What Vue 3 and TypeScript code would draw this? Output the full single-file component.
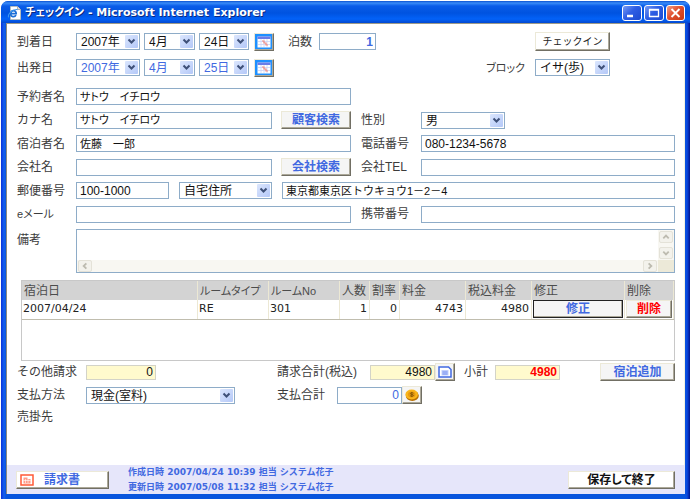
<script setup lang="ts">
import { reactive } from 'vue'

interface Stay {
  date: string
  type: string
  room: string
  guests: number
  discount: number
  price: number
  total: number
}

const form = reactive({
  arriveYear: '2007年',
  arriveMonth: '4月',
  arriveDay: '24日',
  leaveYear: '2007年',
  leaveMonth: '4月',
  leaveDay: '25日',
  nights: '1',
  block: 'イサ(歩)',
  booker: 'サトウ　イチロウ',
  kana: 'サトウ　イチロウ',
  gender: '男',
  guest: '佐藤　一郎',
  phone: '080-1234-5678',
  company: '',
  companyTel: '',
  postal: '100-1000',
  addressKind: '自宅住所',
  address: '東京都東京区トウキョウ1－2－4',
  email: '',
  mobile: '',
  note: '',
  other: '0',
  billed: '4980',
  subtotal: '4980',
  method: '現金(室料)',
  paid: '0',
})

const stays: Stay[] = [
  { date: '2007/04/24', type: 'RE', room: '301', guests: 1, discount: 0, price: 4743, total: 4980 },
]
</script>

<template>
  <div class="window">
    <header class="titlebar">
      <svg class="ie" viewBox="0 0 14 14" aria-hidden="true">
        <path d="M3.5 .5h7l3 3v10h-10z" fill="#fff" stroke="#c8c4a8" stroke-width=".7" />
        <path d="M10.500 .5v3h3" fill="#ddd" stroke="#888" stroke-width=".6" />
        <path d="M3.600 7.600h5.600c0-4-5.200-4-5.500 0-.2 3.600 4.200 4 5.200 1.400" fill="none" stroke="#1c6fd6" stroke-width="1.700" />
        <path d="M1.500 11.400C.5 8 6 2.800 10.500 3.600" fill="none" stroke="#3c97ee" stroke-width="1.100" />
      </svg>
      <h1>チェックイン - Microsoft Internet Explorer</h1>
      <button class="ctl" type="button" aria-label="最小化">
        <svg viewBox="0 0 16 14"><path d="M3 10h6" stroke="#fff" stroke-width="2.500" /></svg>
      </button>
      <button class="ctl" type="button" aria-label="最大化">
        <svg viewBox="0 0 16 14"><path d="M3.500 3.500h9v7h-9zM3 4h10" fill="none" stroke="#fff" stroke-width="1.300" /></svg>
      </button>
      <button class="ctl close" type="button" aria-label="閉じる">
        <svg viewBox="0 0 16 14"><path d="M4 3l8 8M12 3l-8 8" stroke="#fff" stroke-width="1.900" /></svg>
      </button>
    </header>

    <main class="page">
      <section class="stay">
        <div class="row">
          <label class="name" for="ay">到着日</label>
          <span class="pick year"><select id="ay" v-model="form.arriveYear"><option>2007年</option></select><svg class="arrow" viewBox="0 0 13 13"><path d="M3.500 4.500l3 3 3-3" /></svg></span>
          <span class="pick month"><select v-model="form.arriveMonth" aria-label="到着月"><option>4月</option></select><svg class="arrow" viewBox="0 0 13 13"><path d="M3.500 4.500l3 3 3-3" /></svg></span>
          <span class="pick day"><select v-model="form.arriveDay" aria-label="到着日"><option>24日</option></select><svg class="arrow" viewBox="0 0 13 13"><path d="M3.500 4.500l3 3 3-3" /></svg></span>
          <button class="btn cal" type="button" aria-label="カレンダー">
            <svg viewBox="0 0 14 12"><path d="M.5.5h13v11H.5z" fill="#fff" /><path d="M.5.5h13v2.500H.5z" fill="#6a7de8" /><path d="M1 5.500h12M1 8.500h12M4 3v8M7 3v8M10 3v8" stroke="#ccd4f6" stroke-width=".8" /><path d="M5 5h2v2h2v2h2" fill="none" stroke="#f08a80" stroke-width="1.200" /></svg>
          </button>
          <label class="nights" for="nights">泊数</label>
          <input id="nights" v-model="form.nights" class="num blue strong short">
          <button class="btn plain right" type="button">チェックイン</button>
        </div>
        <div class="row blue-picks">
          <label class="name" for="ly">出発日</label>
          <span class="pick year"><select id="ly" v-model="form.leaveYear"><option>2007年</option></select><svg class="arrow" viewBox="0 0 13 13"><path d="M3.500 4.500l3 3 3-3" /></svg></span>
          <span class="pick month"><select v-model="form.leaveMonth" aria-label="出発月"><option>4月</option></select><svg class="arrow" viewBox="0 0 13 13"><path d="M3.500 4.500l3 3 3-3" /></svg></span>
          <span class="pick day"><select v-model="form.leaveDay" aria-label="出発日"><option>25日</option></select><svg class="arrow" viewBox="0 0 13 13"><path d="M3.500 4.500l3 3 3-3" /></svg></span>
          <button class="btn cal" type="button" aria-label="カレンダー">
            <svg viewBox="0 0 14 12"><path d="M.5.5h13v11H.5z" fill="#fff" /><path d="M.5.5h13v2.500H.5z" fill="#6a7de8" /><path d="M1 5.500h12M1 8.500h12M4 3v8M7 3v8M10 3v8" stroke="#ccd4f6" stroke-width=".8" /><path d="M5 5h2v2h2v2h2" fill="none" stroke="#f08a80" stroke-width="1.200" /></svg>
          </button>
          <label class="block kana" for="block">ブロック</label>
          <span class="pick black right"><select id="block" v-model="form.block"><option>イサ(歩)</option></select><svg class="arrow" viewBox="0 0 13 13"><path d="M3.500 4.500l3 3 3-3" /></svg></span>
        </div>
      </section>

      <section class="guest">
        <label for="booker">予約者名</label>
        <input id="booker" v-model="form.booker" class="jp kana">
        <span class="blank"></span>

        <label for="kana">カナ名</label>
        <div class="pair">
          <input id="kana" v-model="form.kana" class="jp kana">
          <button class="btn search" type="button">顧客検索</button>
        </div>
        <label class="second" for="gender">性別</label>
        <span class="pick gender"><select id="gender" v-model="form.gender"><option>男</option><option>女</option></select><svg class="arrow" viewBox="0 0 13 13"><path d="M3.500 4.500l3 3 3-3" /></svg></span>

        <label for="guest">宿泊者名</label>
        <input id="guest" v-model="form.guest" class="jp">
        <label class="second" for="phone">電話番号</label>
        <input id="phone" v-model="form.phone">

        <label for="company">会社名</label>
        <div class="pair">
          <input id="company" v-model="form.company">
          <button class="btn search" type="button">会社検索</button>
        </div>
        <label class="second" for="ctel">会社TEL</label>
        <input id="ctel" v-model="form.companyTel">

        <label for="postal">郵便番号</label>
        <div class="address">
          <input id="postal" v-model="form.postal">
          <span class="pick"><select v-model="form.addressKind" aria-label="住所区分"><option>自宅住所</option></select><svg class="arrow" viewBox="0 0 13 13"><path d="M3.500 4.500l3 3 3-3" /></svg></span>
          <input v-model="form.address" class="jp" aria-label="住所">
        </div>

        <label class="kana" for="email">eメール</label>
        <input id="email" v-model="form.email">
        <label class="second" for="mobile">携帯番号</label>
        <input id="mobile" v-model="form.mobile">
      </section>

      <section class="note">
        <label for="note">備考</label>
        <div class="memo">
          <textarea id="note" v-model="form.note"></textarea>
          <div class="vbar">
            <svg viewBox="0 0 13 11"><path d="M3.500 7l3-3 3 3" /></svg>
            <svg viewBox="0 0 13 11"><path d="M3.500 4l3 3 3-3" /></svg>
          </div>
          <div class="hbar">
            <svg viewBox="0 0 13 11"><path d="M8 2.500l-3 3 3 3" /></svg>
            <svg viewBox="0 0 13 11"><path d="M5 2.500l3 3-3 3" /></svg>
          </div>
          <div class="corner"></div>
        </div>
      </section>

      <section class="list">
        <table>
          <colgroup>
            <col><col class="c72"><col class="c72"><col class="c30"><col class="c30"><col class="c66"><col class="c66"><col class="c93"><col class="c50">
          </colgroup>
          <thead>
            <tr>
              <th>宿泊日</th><th class="kana">ルームタイプ</th><th class="kana">ルームNo</th><th>人数</th><th>割率</th><th>料金</th><th>税込料金</th><th>修正</th><th>削除</th>
            </tr>
          </thead>
          <tbody>
            <tr v-for="s in stays" :key="s.date">
              <td>{{ s.date }}</td>
              <td>{{ s.type }}</td>
              <td>{{ s.room }}</td>
              <td class="n">{{ s.guests }}</td>
              <td class="n">{{ s.discount }}</td>
              <td class="n">{{ s.price }}</td>
              <td class="n">{{ s.total }}</td>
              <td class="act"><button class="btn edit" type="button">修正</button></td>
              <td class="act"><button class="btn del" type="button">削除</button></td>
            </tr>
          </tbody>
        </table>
      </section>

      <section class="sums">
        <label for="other">その他請求</label>
        <input id="other" v-model="form.other" class="num yellow other">
        <div class="line">
          <label class="billed" for="billed">請求合計(税込)</label>
          <input id="billed" v-model="form.billed" class="num yellow">
          <button class="btn icon" type="button" aria-label="明細">
            <svg viewBox="0 0 14 12"><path d="M1 1h9.500L13 3.500V11H1z" fill="#fff" stroke="#4169e1" stroke-width="1.500" /><path d="M3.500 4h7v5.500h-7z" fill="#c3d0fa" /><path d="M4 6h6M4 8h6M6 5v4M8 5v4" stroke="#7f9af0" stroke-width=".7" /></svg>
          </button>
          <label class="subtotal" for="subtotal">小計</label>
          <input id="subtotal" v-model="form.subtotal" class="num yellow red strong">
          <button class="btn add" type="button">宿泊追加</button>
        </div>

        <label for="method">支払方法</label>
        <span class="pick"><select id="method" v-model="form.method"><option>現金(室料)</option></select><svg class="arrow" viewBox="0 0 13 13"><path d="M3.500 4.500l3 3 3-3" /></svg></span>
        <div class="line">
          <label class="paid" for="paid">支払合計</label>
          <input id="paid" v-model="form.paid" class="num blue">
          <button class="btn icon" type="button" aria-label="入金">
            <svg viewBox="0 0 14 12"><ellipse cx="7.300" cy="6.800" rx="6.500" ry="5.100" fill="#b86f00" /><ellipse cx="6.700" cy="5.500" rx="6.300" ry="4.900" fill="#f9b51c" /><ellipse cx="6.700" cy="5.500" rx="3.800" ry="3" fill="#e89a10" /><path d="M8.500 4.300c-1-1-3.500-.7-3.200.4.300 1 3.200.5 3.200 1.700 0 1-2.500 1.200-3.500.2M6.800 3v5" fill="none" stroke="#7d5208" stroke-width=".8" /></svg>
          </button>
        </div>

        <span class="text">売掛先</span>
      </section>
    </main>

    <footer class="foot">
      <button class="btn plain invoice" type="button">
        <svg viewBox="0 0 14 12"><path d="M1 1h12v10H1z" fill="#fff" stroke="#ff5a36" stroke-width="1.500" /><path d="M3.500 3.500h4v1.500h3v4.500h-7z" fill="#ff9c88" /><path d="M3.500 6.500h7M5.500 5v4M8 5v4" stroke="#fff" stroke-width=".6" /></svg>
        <span>請求書</span>
      </button>
      <div class="log">
        <span>作成日時 2007/04/24 10:39 担当 システム花子</span>
        <span>更新日時 2007/05/08 11:32 担当 システム花子</span>
      </div>
      <button class="btn plain save" type="button">保存して終了</button>
    </footer>
  </div>
</template>

<style>
body {
  margin: 0;
  background: #fff;
}
</style>

<style scoped>
.window,
.window * {
  box-sizing: border-box;
}

.window {
  display: flex;
  flex-direction: column;
  min-height: 100vh;
  padding: 0 5px 5px;
  border: 1px solid #fff;
  border-radius: 8px 8px 0 0;
  background: linear-gradient(90deg, #0831d9 0, #1660ee 3px, #0855dd 5px, #0855dd calc(100% - 5px), #0a48e0 calc(100% - 3px), #00138c 100%);
  background-clip: padding-box;
  font-family: "Liberation Sans", "Noto Sans CJK JP", sans-serif;
  font-size: 12px;
  line-height: 16px;
  color: #3c3c3c;
}

.titlebar {
  display: flex;
  align-items: center;
  gap: 2px;
  height: 22px;
  margin: 0 -5px;
  padding: 2px 5px 0 6px;
  border-radius: 7px 7px 0 0;
  background: linear-gradient(#0a50d0 0, #3a8cf8 2px, #0a5ce8 5px, #0053e0 12px, #0362f8 18px, #0348d0 100%);
}

.ie {
  width: 14px;
  height: 14px;
}

.titlebar h1 {
  flex: 1;
  margin: 0 0 0 2px;
  font: bold 11px/16px "DejaVu Sans", "Noto Sans CJK JP", sans-serif;
  font-feature-settings: "palt";
  color: #fff;
  text-shadow: 1px 1px 0 #0a2a80;
}

.ctl {
  width: 20px;
  height: 16px;
  padding: 0;
  border: 1px solid #fff;
  border-radius: 3px;
  background: linear-gradient(135deg, #7a9cf4, #2e5ee4 45%, #1c4ad0);
}

.ctl.close {
  width: 19px;
  background: linear-gradient(135deg, #f0a088, #e05030 45%, #c83a14);
}

.ctl svg {
  display: block;
  width: 100%;
  height: 14px;
}

.page {
  flex: 1;
  padding: 9px 9px 0 9px;
  border-top: 1px solid #9d9a88;
  border-left: 1px solid #8d8a80;
  border-right: 1px solid #f4f1e0;
  background: #fff;
}

label,
.text {
  padding-left: 1px;
  white-space: nowrap;
}

input,
select,
textarea {
  min-width: 0;
  width: 100%;
  height: 17px;
  margin: 0;
  padding: 0 3px;
  border: 1px solid #8eacc8;
  border-radius: 0;
  outline: 0;
  background: #fff;
  font: inherit;
  line-height: 15px;
  color: #111;
}

select {
  appearance: none;
  padding: 1px 16px 0 4px;
}

.jp {
  padding-bottom: 2px;
  font-size: 11px;
}

.kana {
  font-size: 11px;
  font-feature-settings: "palt";
}

.pick {
  display: grid;
  grid-template-columns: minmax(0, 1fr);
}

.pick > * {
  grid-area: 1 / 1;
}

.arrow {
  align-self: center;
  justify-self: end;
  width: 13px;
  height: 13px;
  margin-right: 2px;
  border-radius: 1px;
  background: linear-gradient(135deg, #dbe6fd, #b4c8f8);
  pointer-events: none;
}

.arrow path {
  fill: none;
  stroke: #3e5078;
  stroke-width: 2;
}

.btn {
  height: 18px;
  padding: 0;
  border: 1px solid;
  border-color: #ece9d8 #716f64 #716f64 #ece9d8;
  box-shadow: inset -1px -1px 0 #aca899;
  background: #f5f5f5;
  font: bold 12px/14px "Liberation Sans", "Noto Sans CJK JP", sans-serif;
  color: #4169e1;
  white-space: nowrap;
}

.btn.plain {
  background: #fff;
}

.num {
  text-align: right;
  padding-right: 2px;
}

.blue {
  color: #4169e1;
}

.red {
  color: #f00;
}

.strong {
  font-weight: bold;
}

.yellow {
  height: 15px;
  border-color: #d3d3c8;
  background: #fffacd;
}

.stay {
  display: grid;
  gap: 9px;
}

.row {
  display: flex;
  align-items: center;
  height: 17px;
}

.row .name {
  width: 60px;
}

.year {
  width: 64px;
  margin-right: 4px;
}

.month {
  width: 51px;
  margin-right: 4px;
}

.day {
  width: 50px;
  margin-right: 5px;
}

.blue-picks select {
  color: #4169e1;
}

.blue-picks .black select {
  color: #111;
}

.cal {
  display: grid;
  place-items: center;
  width: 20px;
  background: #1e90ff;
}

.cal svg,
.icon svg,
.invoice svg {
  width: 14px;
  height: 12px;
}

.nights {
  width: 45px;
  padding-left: 14px;
}

.short {
  width: 57px;
}

.right {
  width: 75px;
  margin-right: 65px;
}

.btn.right {
  height: 19px;
  margin-left: auto;
  font-weight: normal;
  font-size: 10px;
  color: #222;
}

.block {
  margin-left: auto;
  margin-right: 10px;
}

.guest {
  display: grid;
  grid-template-columns: 60px 275px 70px minmax(0, 1fr);
  grid-template-rows: repeat(6, 1fr);
  align-items: center;
  min-height: 141px;
  margin-top: 9px;
}

.blank {
  grid-column: 3 / 5;
}

.second {
  padding-left: 10px;
}

.pair {
  display: grid;
  grid-template-columns: minmax(0, 1fr) 70px;
  gap: 9px;
  align-items: center;
}

.address {
  grid-column: 2 / 5;
  display: grid;
  grid-template-columns: 93px 93px minmax(0, 1fr);
  gap: 10px;
}

.gender {
  width: 84px;
}

.note {
  display: grid;
  grid-template-columns: 60px minmax(0, 1fr);
  margin-top: 3px;
}

.note label {
  padding-top: 3px;
}

.memo {
  display: grid;
  grid-template-columns: minmax(0, 1fr) 16px;
  grid-template-rows: 30px 12px;
  border: 1px solid #8eacc8;
}

.memo textarea {
  height: 100%;
  border: 0;
  resize: none;
  overflow: hidden;
}

.vbar,
.hbar {
  display: flex;
  justify-content: space-between;
  background: #f8f7f2;
}

.vbar {
  flex-direction: column;
  align-items: center;
  padding: 1px 0;
}

.hbar {
  padding: 0 1px;
}

.vbar svg,
.hbar svg {
  width: 14px;
  height: 12px;
  border: 1px solid #e4e2d8;
  border-radius: 2px;
  background: #f3f2ec;
}

.vbar path,
.hbar path {
  fill: none;
  stroke: #bdbbb0;
  stroke-width: 2;
}

.corner {
  background: #ece9d8;
}

.list {
  min-height: 81px;
  margin-top: 7px;
  margin-left: 5px;
  border: 1px solid #c8c8c8;
}

table {
  width: 100%;
  table-layout: fixed;
  border-collapse: collapse;
  font-size: 11px;
  color: #222;
}

.c72 { width: 71px; }
.c30 { width: 30px; }
.c66 { width: 66px; }
.c93 { width: 93px; }
.c50 { width: 49px; }

th,
td {
  height: 19px;
  padding: 0 2px;
  border-right: 1px solid #ece8d4;
  line-height: 16px;
  text-align: left;
  white-space: nowrap;
}

th {
  background: #d3d3d3;
  font-size: 12px;
  font-weight: normal;
  color: #4c4c4c;
}

th.kana {
  font-size: 11px;
}

td {
  padding: 0 1px;
  border-bottom: 1px solid #c0bdae;
  font-family: "DejaVu Sans", sans-serif;
}

td.n {
  padding-right: 2px;
  text-align: right;
}

td.act {
  padding: 0 1px;
}

td .btn {
  display: block;
  width: 100%;
}

.btn.edit {
  border-color: #222;
}

.btn.del {
  color: #f00;
}

.sums {
  display: grid;
  grid-template-columns: 70px 149px minmax(0, 1fr);
  row-gap: 5px;
  align-items: center;
  margin-top: 2px;
}

.other {
  width: 70px;
}

.line {
  display: flex;
  align-items: center;
  padding-left: 41px;
}

.line input {
  width: 65px;
}

.billed {
  width: 94px;
}

.subtotal {
  width: 40px;
  padding-left: 9px;
}

.paid {
  width: 61px;
}

.icon {
  display: grid;
  place-items: center;
  width: 20px;
}

.add {
  width: 75px;
  margin-left: auto;
}

.foot {
  display: flex;
  align-items: center;
  height: 29px;
  padding: 0 10px 0 9px;
  border-left: 1px solid #8d8a80;
  background: #e6e6fa;
}

.invoice {
  display: flex;
  align-items: center;
  gap: 10px;
  width: 93px;
  padding-left: 3px;
}

.log {
  display: grid;
  margin-left: 19px;
  font: bold 9px/15px "DejaVu Sans", "Noto Sans CJK JP", sans-serif;
  color: #4169e1;
}

.save {
  width: 107px;
  margin-left: auto;
  font-feature-settings: "palt";
  color: #111;
}
</style>
